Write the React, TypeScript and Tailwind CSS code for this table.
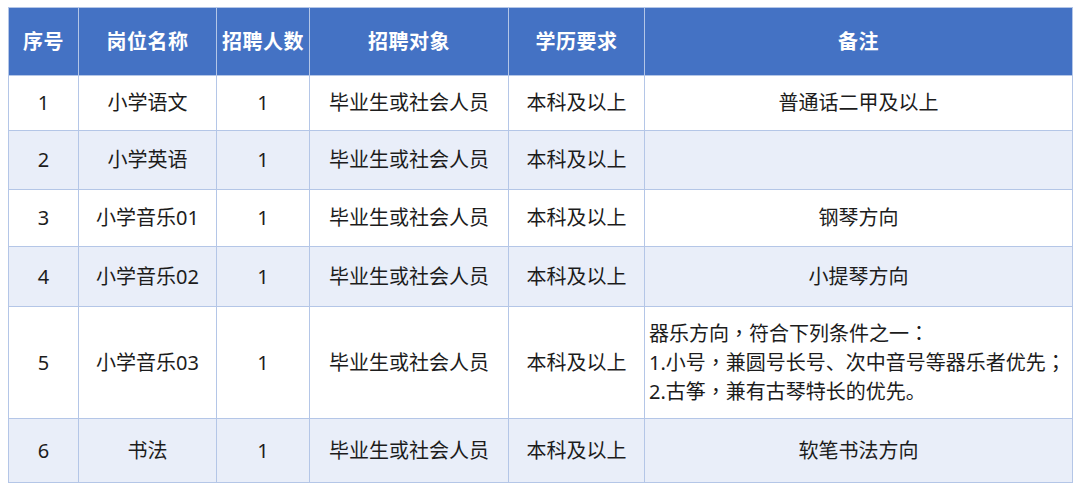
import React from "react";

const rows = [
  { no: "1", name: "小学语文", num: "1", target: "毕业生或社会人员", edu: "本科及以上", note: "普通话二甲及以上", h: "h-[55px]" },
  { no: "2", name: "小学英语", num: "1", target: "毕业生或社会人员", edu: "本科及以上", note: "", h: "h-[59px]" },
  { no: "3", name: "小学音乐01", num: "1", target: "毕业生或社会人员", edu: "本科及以上", note: "钢琴方向", h: "h-[57px]" },
  { no: "4", name: "小学音乐02", num: "1", target: "毕业生或社会人员", edu: "本科及以上", note: "小提琴方向", h: "h-[60px]" },
  { no: "5", name: "小学音乐03", num: "1", target: "毕业生或社会人员", edu: "本科及以上", note: "multi", h: "h-[112px]" },
  { no: "6", name: "书法", num: "1", target: "毕业生或社会人员", edu: "本科及以上", note: "软笔书法方向", h: "h-[64px]" },
];

const headers = ["序号", "岗位名称", "招聘人数", "招聘对象", "学历要求", "备注"];
const widths = ["w-[70px]", "w-[138px]", "w-[93px]", "w-[199px]", "w-[136px]", "w-[428px]"];

function P({ c }: { c: string }) {
  return (
    <span style={{ fontFamily: '"Noto Sans CJK TC", "Noto Sans CJK SC", sans-serif' }}>{c}</span>
  );
}

export default function App() {
  return (
    <div
      className="w-[1080px] h-[491px] bg-white pt-[7px] pl-[8px]"
      style={{ fontFamily: '"Noto Sans", "Noto Sans CJK SC", sans-serif' }}
    >
      <table className="table-fixed border-collapse w-[1064px] border border-[#8eaadb] text-[20px] leading-none text-[#1c1c1c]">
        <colgroup>
          {widths.map((w, i) => (
            <col key={i} className={w} />
          ))}
        </colgroup>
        <thead>
          <tr className="h-[68px] bg-[#4472c4]">
            {headers.map((h) => (
              <th
                key={h}
                className="border border-[#b4c6e7] text-white font-bold text-[20px] text-center align-middle p-0 tracking-[0.5px]"
              >
                {h}
              </th>
            ))}
          </tr>
        </thead>
        <tbody>
          {rows.map((r, idx) => (
            <tr key={r.no} className={`${r.h} ${idx % 2 === 1 ? "bg-[#e9eef9]" : "bg-white"}`}>
              <td className="border border-[#b4c6e7] text-center align-middle p-0">{r.no}</td>
              <td className="border border-[#b4c6e7] text-center align-middle p-0">{r.name}</td>
              <td className="border border-[#b4c6e7] text-center align-middle p-0">{r.num}</td>
              <td className="border border-[#b4c6e7] text-center align-middle p-0">{r.target}</td>
              <td className="border border-[#b4c6e7] text-center align-middle p-0">{r.edu}</td>
              {r.note === "multi" ? (
                <td className="border border-[#b4c6e7] text-left align-middle pl-[4px] pr-0 py-0 leading-[28px]">
                  <div>
                    器乐方向<P c="，" />符合下列条件之一<P c="：" />
                  </div>
                  <div>
                    1.小号<P c="，" />兼圆号长号、次中音号等器乐者优先<P c="；" />
                  </div>
                  <div>
                    2.古筝<P c="，" />兼有古琴特长的优先。
                  </div>
                </td>
              ) : (
                <td className="border border-[#b4c6e7] text-center align-middle p-0">{r.note}</td>
              )}
            </tr>
          ))}
        </tbody>
      </table>
    </div>
  );
}
